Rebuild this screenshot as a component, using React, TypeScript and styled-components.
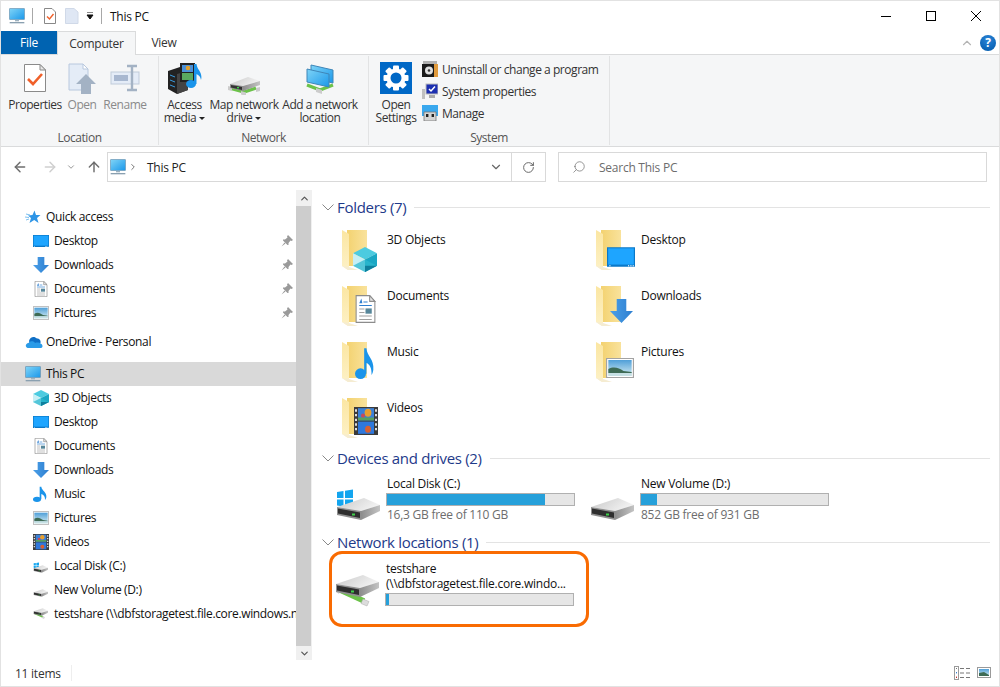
import React from "react"
import styled, {createGlobalStyle} from "styled-components"
import {ArrowLeft, ArrowRight, ArrowUp, ChevronDown, ChevronRight, ChevronUp, RotateCw, Search} from "lucide-react"

const Global = createGlobalStyle`
  html, body {
    margin: 0;
    padding: 0;
    background: #fff;
  }
  * {
    box-sizing: border-box;
  }
`

const Window = styled.div`
  width: 1000px;
  height: 687px;
  border: 1px solid #e2e2e2;
  background: #fff;
  display: flex;
  flex-direction: column;
  overflow: hidden;
  font-family: "Open Sans", "Noto Sans", sans-serif;
  font-size: 12px;
  letter-spacing: -0.25px;
  color: #111;
`

const TitleBar = styled.header`
  height: 30px;
  display: flex;
  align-items: center;
  padding-left: 8px;
  flex: none;
`

const QuickSep = styled.span`
  width: 1px;
  height: 16px;
  background: #a8a8a8;
  margin: 0 7px;
`

const TitleText = styled.span`
  margin-left: 1px;
`

const WindowButtons = styled.div`
  margin-left: auto;
  display: flex;
  margin-right: 1px;
`

const WindowButton = styled.div`
  width: 45px;
  height: 30px;
  display: flex;
  align-items: center;
  justify-content: center;
`

const TabRow = styled.nav`
  height: 24px;
  flex: none;
  display: flex;
  border-bottom: 1px solid #dadbdc;
  align-items: stretch;
`

const Tab = styled.div`
  width: ${(p) => p.$w}px;
  height: ${(p) => (p.$active ? 24 : 23)}px;
  display: flex;
  align-items: center;
  justify-content: center;
  color: ${(p) => (p.$file ? "#fff" : "#333")};
  background: ${(p) => (p.$file ? "#0063b1" : p.$active ? "#f5f6f7" : "#fff")};
  ${(p) => p.$active && "border: 1px solid #dadbdc; border-bottom: 0;"}
`

const TabTools = styled.div`
  margin-left: auto;
  display: flex;
  align-items: center;
  gap: 6px;
  margin-right: 3px;
  color: #b5b5b5;
`

const Help = styled.span`
  width: 16px;
  height: 16px;
  border-radius: 50%;
  background: radial-gradient(circle at 50% 30%, #2a84d8, #0058a8);
  color: #fff;
  font-weight: 700;
  font-size: 12px;
  display: flex;
  align-items: center;
  justify-content: center;
`

const Ribbon = styled.section`
  height: 92px;
  flex: none;
  background: #f5f6f7;
  border-bottom: 1px solid #dadbdc;
  display: flex;
  padding-top: 1px;
  letter-spacing: -0.45px;
`

const Group = styled.div`
  width: ${(p) => p.$w}px;
  height: 89px;
  border-right: 1px solid #e2e3e4;
  display: flex;
  flex-direction: column;
`

const GroupBody = styled.div`
  height: 74px;
  flex: none;
  display: flex;
  padding-left: ${(p) => p.$pad}px;
  padding-top: 6px;
`

const GroupLabel = styled.div`
  height: 15px;
  line-height: 15px;
  text-align: center;
  color: #555;
`

const BigButton = styled.div`
  width: ${(p) => p.$w}px;
  display: flex;
  flex-direction: column;
  align-items: center;
  text-align: center;
  line-height: 13px;
  color: ${(p) => (p.$off ? "#8a8a8a" : "#333")};
  white-space: nowrap;
`

const BigIcon = styled.div`
  height: 32px;
  margin-bottom: 4px;
  display: flex;
  align-items: flex-end;
`

const Caret = styled.span`
  display: inline-block;
  width: 0;
  height: 0;
  margin-left: 3px;
  vertical-align: 2px;
  border-left: 3px solid transparent;
  border-right: 3px solid transparent;
  border-top: 3px solid #222;
`

const SmallList = styled.div`
  display: flex;
  flex-direction: column;
  margin-left: 5px;
  margin-top: -4px;
`

const SmallItem = styled.div`
  height: 22px;
  display: flex;
  align-items: center;
  gap: 4px;
  color: #333;
`

const AddressRow = styled.div`
  height: 43px;
  flex: none;
  padding-top: 5px;
  display: flex;
  align-items: flex-start;
  color: #777;
`

const NavBtn = styled.div`
  width: ${(p) => p.$w}px;
  height: 30px;
  display: flex;
  align-items: center;
  justify-content: center;
  color: ${(p) => p.$c};
`

const AddressBox = styled.div`
  width: 439px;
  height: 30px;
  border: 1px solid #d9d9d9;
  display: flex;
  align-items: center;
  padding-left: 2px;
`

const AddressText = styled.span`
  margin-left: 7px;
  color: #222;
`

const AddressEnd = styled.div`
  margin-left: auto;
  display: flex;
  align-items: center;
  height: 100%;
`

const AddressBtn = styled.div`
  width: ${(p) => p.$w}px;
  height: 100%;
  display: flex;
  align-items: center;
  justify-content: center;
  color: #666;
  ${(p) => p.$sep && "border-left: 1px solid #d9d9d9;"}
`

const SearchBox = styled.div`
  width: 429px;
  height: 30px;
  margin-left: 12px;
  border: 1px solid #d9d9d9;
  display: flex;
  align-items: center;
  padding-left: 13px;
  gap: 13px;
  color: #6d6d6d;
`

const Main = styled.div`
  flex: 1;
  min-height: 0;
  display: flex;
`

const Sidebar = styled.aside`
  width: 295px;
  flex: none;
  padding-top: 15px;
  overflow: hidden;
  letter-spacing: -0.35px;
`

const SideRow = styled.div`
  height: 24px;
  display: flex;
  align-items: center;
  white-space: nowrap;
  overflow: hidden;
  padding-left: ${(p) => (p.$level === 2 ? 32 : 24)}px;
  padding-bottom: 1px;
  margin-top: ${(p) => p.$top ?? 0}px;
  background: ${(p) => (p.$selected ? "#d9d9d9" : "transparent")};
  gap: 5px;
`

const PinMark = styled.span`
  margin-left: auto;
  margin-right: 3px;
  display: flex;
`

const Scrollbar = styled.div`
  width: 16px;
  flex: none;
  background: #f0f0f0;
  display: flex;
  flex-direction: column;
  color: #555;
`

const ScrollEnd = styled.div`
  height: ${(p) => p.$h}px;
  display: flex;
  align-items: center;
  justify-content: center;
`

const ScrollThumb = styled.div`
  flex: 1;
  background: #cdcdcd;
  width: 15px;
`

const Content = styled.main`
  flex: 1;
  min-width: 0;
  padding-top: 7px;
  display: flex;
  flex-direction: column;
`

const SectionHeader = styled.div`
  height: 20px;
  flex: none;
  display: flex;
  align-items: center;
  padding-left: 10px;
  padding-right: 9px;
`

const SectionTitle = styled.span`
  margin-left: 3px;
  font-size: 15px;
  letter-spacing: -0.3px;
  color: #1e3a8a;
  white-space: nowrap;
`

const SectionLine = styled.span`
  flex: 1;
  height: 1px;
  background: #e3e3e3;
  margin-left: 8px;
`

const FolderGrid = styled.div`
  display: grid;
  grid-template-columns: 254px 254px;
  grid-template-rows: 56px 56px 56px 52px;
  margin-top: 11px;
  padding-left: 26px;
`

const FolderTile = styled.div`
  display: flex;
  gap: 1px;
  line-height: 24px;
`

const DriveGrid = styled.div`
  display: grid;
  grid-template-columns: 254px 254px;
  height: 56px;
  margin-top: 8px;
  padding-left: 23px;
`

const DriveTile = styled.div`
  display: flex;
  gap: 3px;
`

const DriveInfo = styled.div`
  width: 189px;
  line-height: 16px;
  white-space: nowrap;
`

const Name = styled.div`
  padding-left: 1px;
`

const Free = styled.div`
  padding-left: 1px;
  margin-top: 1px;
  color: #6d6d6d;
`

const Bar = styled.div`
  height: 13px;
  margin-top: ${(p) => p.$top ?? 1}px;
  background: #e6e6e6;
  border: 1px solid #b0b0b0;
`

const BarFill = styled.div`
  height: 100%;
  background: #26a0da;
`

const NetTile = styled.div`
  width: 260px;
  height: 76px;
  margin: -1px 0 0 17px;
  border: 3px solid #f96b02;
  border-radius: 13px;
  padding: 6px 0 0 2px;
  display: flex;
  gap: 3px;
`

const NetInfo = styled.div`
  width: 189px;
  padding-top: 1px;
  line-height: 15px;
  white-space: nowrap;
`

const NetIcon = styled.div`
  padding-top: 8px;
`

const StatusBar = styled.footer`
  height: 26px;
  flex: none;
  display: flex;
  align-items: center;
  padding-left: 14px;
  color: #333;
`

const StatusSep = styled.span`
  width: 1px;
  height: 16px;
  margin-left: 10px;
  background: #eee;
`

const ViewBtns = styled.div`
  margin-left: auto;
  margin-right: 8px;
  display: flex;
  align-items: center;
  gap: 7px;
`

/* artwork, all in a 24 unit box so it can go in the tree or on a folder */
const Defs = () => (
  <svg width="0" height="0" style={{position: "absolute"}}>
    <defs>
      <linearGradient id="screen" x1="0" y1="0" x2="1" y2="1">
        <stop offset="0" stopColor="#7fd4f7" />
        <stop offset="1" stopColor="#1b98ea" />
      </linearGradient>
      <linearGradient id="sky" x1="0" y1="0" x2="0" y2="1">
        <stop offset="0" stopColor="#4f9fd8" />
        <stop offset="1" stopColor="#d8eef2" />
      </linearGradient>
      <linearGradient id="back" x1="0" y1="0" x2="1" y2="0">
        <stop offset="0" stopColor="#f3d270" />
        <stop offset="1" stopColor="#f9e29c" />
      </linearGradient>
      <linearGradient id="flap" x1="0" y1="0" x2="0" y2="1">
        <stop offset="0" stopColor="#fbe6a2" />
        <stop offset="1" stopColor="#fdf1c6" />
      </linearGradient>
      <linearGradient id="driveTop" x1="0" y1="0" x2="1" y2="0.4">
        <stop offset="0" stopColor="#c8c8c8" />
        <stop offset="1" stopColor="#f2f2f2" />
      </linearGradient>
      <linearGradient id="driveSide" x1="0" y1="0" x2="1" y2="0">
        <stop offset="0" stopColor="#8d8d8d" />
        <stop offset="1" stopColor="#c4c4c4" />
      </linearGradient>
      <linearGradient id="arrow" x1="0" y1="0" x2="1" y2="0">
        <stop offset="0" stopColor="#4a9fe8" />
        <stop offset="1" stopColor="#2e7fd0" />
      </linearGradient>
    </defs>
  </svg>
)

const MonitorArt = () => (
  <>
    <rect x="1" y="1" width="22" height="16" fill="url(#screen)" stroke="#5e8fb0" />
    <rect x="9" y="18" width="6" height="2" fill="#9eb2c0" />
    <rect x="1" y="21" width="22" height="2" fill="#8aa0b0" />
  </>
)

const CubeArt = () => (
  <>
    <path d="M12 0 24 6 12 12 0 6z" fill="#4ccbe0" />
    <path d="M0 6 12 12V24L0 18z" fill="#c6eff5" />
    <path d="M12 12 24 6V18L12 24z" fill="#1aa7c4" />
    <path d="M0 18 12 12 24 18 12 24z" fill="#2eb8cf" opacity=".75" />
    <path d="M12 18 24 18 12 24z" fill="#0f7f9d" />
  </>
)

const DesktopArt = () => (
  <>
    <rect x="0" y="3" width="24" height="18" fill="#0a78c8" />
    <rect x="1" y="4" width="22" height="15" fill="#1ea5ff" />
    <rect x="2" y="19.6" width="1" height="1" fill="#fff" />
    <rect x="18" y="19.6" width="1" height="1" fill="#fff" />
    <rect x="20" y="19.6" width="1" height="1" fill="#fff" />
    <rect x="22" y="19.6" width="1" height="1" fill="#fff" />
  </>
)

const ArrowArt = () => <path d="M7 0H17V12H24L12 24 0 12H7z" fill="url(#arrow)" />

const DocArt = () => (
  <>
    <path d="M3 .5H16L21 5.5V23.5H3z" fill="#fff" stroke="#8c8c8c" />
    <path d="M16 .5V5.5H21z" fill="#e4e4e4" stroke="#8c8c8c" />
    <path d="M6 7 8 3 9 7z" fill="#2f7fd0" />
    <path d="M10 6H14M6 9H18" stroke="#2f7fd0" />
    <path d="M6 12H11M6 15H11M6 18H18M6 21H18" stroke="#a0a0a0" />
    <rect x="12" y="11.5" width="6" height="4.5" fill="#56869a" />
  </>
)

const PictureArt = () => (
  <>
    <rect x=".5" y="2.5" width="23" height="19" fill="#fff" stroke="#a3a3a3" />
    <rect x="2" y="4" width="20" height="16" fill="url(#sky)" />
    <path d="M2 13C7 10 11 12 15 15L22 16V17H2z" fill="#3e6b55" />
    <path d="M2 17H22V20H2z" fill="#c6e0e4" />
  </>
)

const NoteArt = () => (
  <>
    <ellipse cx="6" cy="20" rx="6" ry="4" fill="#1a94ea" />
    <path d="M10 1H12.5C13 7 21 9 20 17 19.5 19 19 20 18 21 18.5 16 16 13 12.5 12V20H10z" fill="#1a94ea" />
  </>
)

const FilmArt = () => (
  <>
    <rect x="0" y="0" width="24" height="24" fill="#3b3b3b" />
    <rect x="4" y="1" width="16" height="10.5" fill="#3a80d8" />
    <rect x="4" y="12.5" width="16" height="10.5" fill="#2f78dc" />
    <circle cx="14" cy="5" r="3.4" fill="#e8a030" />
    <circle cx="9" cy="7.5" r="2" fill="#c84a5a" />
    <path d="M4 9H20V11.5H4z" fill="#59a060" />
    <circle cx="14" cy="19" r="3" fill="#d86030" />
    <path d="M1 2H3V4H1zM1 6H3V8H1zM1 10H3V12H1zM1 14H3V16H1zM1 18H3V20H1zM21 2H23V4H21zM21 6H23V8H21zM21 10H23V12H21zM21 14H23V16H21zM21 18H23V20H21z" fill="#ddd" />
  </>
)

const Art = ({children, size = 16}) => (
  <svg width={size} height={size} viewBox="0 0 24 24" style={{flex: "none"}}>
    {children}
  </svg>
)

const Folder = ({x, y, w, h, children}) => (
  <svg width="48" height="48" viewBox="0 0 48 48" style={{flex: "none"}}>
    <path d="M9 2H29V38H9z" fill="url(#back)" />
    <path d="M4 2 11 6V42H10L4 38z" fill="url(#flap)" />
    <path d="M4 38 10 42H20L11 39z" fill="#f5ecd2" />
    <svg x={x} y={y} width={w} height={h} viewBox="0 0 24 24" preserveAspectRatio="none">
      {children}
    </svg>
  </svg>
)

const Drive = ({size = 48, net, win}) => (
  <svg width={size} height={size} viewBox="0 0 48 48" style={{flex: "none"}}>
    {win && <path d="M2 16 8.5 15V22H2zM10 14.8 18 13.5V22H10zM2 23.5H8.5V30.5L2 29.5zM10 23.5H18V32L10 30.8z" fill="#12a5ef" />}
    <g transform={net ? "translate(2 7)" : "translate(2 22)"}>
      {net && (
        <>
          <path d="M4 15 28 26" stroke="#6cc24a" strokeWidth="5.5" fill="none" />
          <path d="M0 12 5 14.5 3 19 0 17z" fill="#d4d4d4" />
          <path d="M27 24 33 26.5 31 31 25 28.5z" fill="#dcdcdc" stroke="#aaa" strokeWidth=".5" />
        </>
      )}
      <path d="M0 9 27 0 43 7 24 13z" fill="url(#driveTop)" />
      <path d="M0 9 24 13V22L0 17z" fill="#8f8f8f" />
      <path d="M1 10.5 23 14.5V20L1 15.5z" fill="#2e2e2e" />
      <path d="M24 13 43 7V13L24 22z" fill="url(#driveSide)" />
      <rect x="15" y="15.5" width="3" height="2" fill="#3ed04a" />
    </g>
  </svg>
)

const SectionChevron = () => (
  <svg width="12" height="7" viewBox="0 0 12 7" style={{flex: "none"}}>
    <path d="M.5 .5 6 6 11.5 .5" stroke="#888" fill="none" />
  </svg>
)

const PinIcon = () => (
  <svg width="12" height="12" viewBox="0 0 12 12">
    <path d="M7 0 12 5 10.5 6 9.5 5.5 7.5 8 7.5 10 6.5 10 2 5.5 2 4.5 4 4.5 6.5 2.5 6 1.5z" fill="#9a9a9a" />
    <path d="M3.5 7.5 .5 11.5 4.5 8.5z" fill="#9a9a9a" />
  </svg>
)

const StarIcon = () => (
  <svg width="16" height="16" viewBox="0 0 16 16" style={{flex: "none"}}>
    <path d="M9.5 1.5 11 6 15.5 6 12 9 13.5 14 9.2 11 4.5 14 6 9 3 6.5 7.5 6z" fill="#2e95e6" />
    <path d="M1 5 5 6M0 8 4 8.5M1 11 4 10" stroke="#7cc0f0" />
  </svg>
)

const CloudIcon = () => (
  <svg width="18" height="14" viewBox="0 0 18 14" style={{flex: "none", marginRight: -2}}>
    <path d="M4 6C5 2 9 .5 12 3.5 15 3.5 16 6 15.5 8L5 9z" fill="#0f6fc6" />
    <path d="M3 13C0 12.5 0 8.5 3.5 8 5 5.5 9 5.5 10 8 13 6.5 18 8.5 17.5 11.5 17.2 12.7 16.5 13 15 13z" fill="#2a9be8" />
  </svg>
)

const PropertiesIcon = () => (
  <svg width="32" height="32" viewBox="0 0 32 32">
    <path d="M5.5 2.5H21L26.5 8V29.5H5.5z" fill="#fff" stroke="#8a8a8a" />
    <path d="M21 2.5V8H26.5z" fill="#e8e8e8" stroke="#8a8a8a" />
    <path d="M9 17 14 22 23 12" stroke="#f0602a" strokeWidth="2.6" fill="none" />
  </svg>
)

const OpenIcon = () => (
  <svg width="32" height="32" viewBox="0 0 32 32">
    <path d="M3 2H17L22 7V28H3z" fill="#e4ecf7" stroke="#b8c8de" />
    <path d="M17 2V7H22z" fill="#fff" stroke="#b8c8de" />
    <path d="M20 12 30 22H25V32H15V22H10z" fill="#a3b2c4" />
  </svg>
)

const RenameIcon = () => (
  <svg width="32" height="32" viewBox="0 0 32 32">
    <rect x="2" y="10" width="28" height="12" fill="#e4ecf7" stroke="#c0cbda" />
    <rect x="5" y="13" width="14" height="6" fill="#a8b8d0" />
    <path d="M18 4H28M18 28H28M23 4V28" stroke="#a3b2c4" strokeWidth="2.4" />
  </svg>
)

const MediaIcon = () => (
  <svg width="34" height="32" viewBox="0 0 34 32">
    <path d="M0 9 12 5 20 9V28L9 32 0 27z" fill="#222" />
    <path d="M9 12 20 9V28L9 32z" fill="#444" />
    <path d="M2 13 7 15M2 18 7 20M2 23 7 25" stroke="#3a9be0" />
    <rect x="12" y="1" width="15" height="19" fill="#222" />
    <rect x="14" y="3" width="11" height="7" fill="#4a90d8" />
    <rect x="14" y="11" width="11" height="7" fill="#5aa860" />
    <circle cx="20" cy="6" r="2.3" fill="#e0a030" />
    <ellipse cx="23" cy="22" rx="5" ry="4" fill="#1a94ea" />
    <path d="M26 2H28.5C29 8 35 10 33 18 32.5 14 30 13 28.5 12V22H26z" fill="#1a94ea" />
  </svg>
)

const NetDriveIcon = () => (
  <svg width="34" height="32" viewBox="0 0 34 32" style={{marginBottom: "-1px"}}>
    <g transform="translate(1 14)">
      <path d="M2 11 16 15 28 11" stroke="#6cc24a" strokeWidth="3.4" fill="none" />
      <path d="M0 9 4 10 4 14 0 13z" fill="#ccc" />
      <path d="M28 11 32 10V14L28 15z" fill="#ccc" />
      <path d="M13 14 18 15.5V19L13 17.5z" fill="#ccc" />
      <path d="M2 7 20 0 32 4 15 9z" fill="url(#driveTop)" />
      <path d="M2 7 15 9V14L2 11z" fill="#8f8f8f" />
      <path d="M3 8 14 10V13L3 10.5z" fill="#333" />
      <path d="M15 9 32 4V8L15 14z" fill="url(#driveSide)" />
      <rect x="9" y="10" width="2" height="1.4" fill="#3ed04a" />
    </g>
  </svg>
)

const AddNetIcon = () => (
  <svg width="30" height="32" viewBox="0 0 30 32" style={{marginBottom: "-1px"}}>
    <path d="M2 22 15 27 28 22" stroke="#6cc24a" strokeWidth="3.4" fill="none" />
    <path d="M6 2 28 7V20L6 15z" fill="url(#screen)" stroke="#3f86b8" />
    <path d="M2 6 24 11V24L2 19z" fill="url(#screen)" stroke="#3f86b8" />
    <path d="M11 25 17 27V31L11 29z" fill="#ccc" />
  </svg>
)

const SettingsIcon = () => (
  <svg width="32" height="32" viewBox="0 0 32 32">
    <rect width="32" height="32" fill="#0068c6" />
    <g transform="translate(16 16)" fill="#fff">
      {[0, 45, 90, 135, 180, 225, 270, 315].map((a) => (
        <rect key={a} x="-3" y="-12.5" width="6" height="6" rx="1" transform={`rotate(${a})`} />
      ))}
    </g>
    <circle cx="16" cy="16" r="7.5" fill="none" stroke="#fff" strokeWidth="4" />
  </svg>
)

const UninstallIcon = () => (
  <svg width="16" height="16" viewBox="0 0 16 16" style={{flex: "none"}}>
    <rect x="1" y="0" width="14" height="4" fill="#b0b0b0" />
    <rect x="0" y="3" width="16" height="13" fill="#1a1a1a" />
    <rect x="12" y="3" width="4" height="13" fill="#e09a3c" />
    <circle cx="7" cy="9.5" r="4" fill="#e0e0e0" />
    <circle cx="7" cy="9.5" r="1.3" fill="#333" />
  </svg>
)

const SysPropsIcon = () => (
  <svg width="16" height="16" viewBox="0 0 16 16" style={{flex: "none"}}>
    <rect x="0" y="6" width="3" height="10" fill="#c0c0c0" />
    <rect x="4" y="1" width="12" height="10" fill="#1c2fb0" stroke="#bbb" />
    <path d="M7 6 9 8 13 3.5" stroke="#fff" strokeWidth="1.5" fill="none" />
    <rect x="7" y="12" width="6" height="3" fill="#aaa" />
  </svg>
)

const ManageIcon = () => (
  <svg width="16" height="16" viewBox="0 0 16 16" style={{flex: "none"}}>
    <rect x="0" y="0" width="16" height="11" fill="#39a8ee" />
    <path d="M2 16V7H14V16z" fill="#d4d4d4" stroke="#777" strokeWidth=".8" />
    <rect x="4" y="9" width="2.4" height="3" fill="#222" />
    <rect x="9.6" y="9" width="2.4" height="3" fill="#222" />
  </svg>
)

const DetailsViewIcon = () => (
  <svg width="16" height="14" viewBox="0 0 16 14">
    <rect x=".5" y=".5" width="4" height="13" fill="#fff" stroke="#9a9a9a" />
    <rect x="2" y="2" width="1" height="1" fill="#777" />
    <rect x="2" y="6" width="1" height="1.4" fill="#3a7fd0" />
    <rect x="2" y="10.6" width="1" height="1.4" fill="#c03030" />
    <path d="M6 2.5H10M12 2.5H16M6 7H10M12 7H16M6 11.5H10M12 11.5H16" stroke="#777" />
  </svg>
)

const ThumbViewIcon = () => (
  <svg width="14" height="12" viewBox="0 0 14 12">
    <rect x=".5" y=".5" width="13" height="10" fill="#fff" stroke="#9a9a9a" />
    <rect x="2" y="2" width="10" height="7" fill="url(#sky)" />
    <path d="M2 6 7 5 12 8V9H2z" fill="#3e6b55" />
  </svg>
)

const folders = [
  {name: "3D Objects", x: 15, y: 19, w: 24, h: 25, art: <CubeArt />},
  {name: "Desktop", x: 15, y: 16, w: 28, h: 26, art: <DesktopArt />},
  {name: "Documents", x: 15, y: 11, w: 25, h: 28, art: <DocArt />},
  {name: "Downloads", x: 18, y: 15, w: 23, h: 24, art: <ArrowArt />},
  {name: "Music", x: 17, y: 7, w: 22, h: 32, art: <NoteArt />},
  {name: "Pictures", x: 14, y: 16, w: 28, h: 24, art: <PictureArt />},
  {name: "Videos", x: 16, y: 11, w: 24, h: 28, art: <FilmArt />},
]

const pinned = [
  {name: "Desktop", art: <DesktopArt />},
  {name: "Downloads", art: <ArrowArt />},
  {name: "Documents", art: <DocArt />},
  {name: "Pictures", art: <PictureArt />},
]

const thisPc = [
  {name: "3D Objects", icon: <Art><CubeArt /></Art>},
  {name: "Desktop", icon: <Art><DesktopArt /></Art>},
  {name: "Documents", icon: <Art><DocArt /></Art>},
  {name: "Downloads", icon: <Art><ArrowArt /></Art>},
  {name: "Music", icon: <Art><NoteArt /></Art>},
  {name: "Pictures", icon: <Art><PictureArt /></Art>},
  {name: "Videos", icon: <Art><FilmArt /></Art>},
  {name: "Local Disk (C:)", icon: <Drive size={16} win />},
  {name: "New Volume (D:)", icon: <Drive size={16} />},
  {name: "testshare (\\\\dbfstoragetest.file.core.windows.net)", icon: <Drive size={16} net />},
]

export default function App() {
  return (
    <Window>
      <Global />
      <Defs />
      <TitleBar>
        <Art><MonitorArt /></Art>
        <QuickSep />
        <svg width="14" height="16" viewBox="0 0 14 16" style={{marginLeft: 3}}>
          <path d="M1.5 .5H9L12.5 4V15.5H1.5z" fill="#fff" stroke="#888" />
          <path d="M4 8.5 6.5 11 10.5 6" stroke="#f0602a" strokeWidth="1.4" fill="none" />
        </svg>
        <svg width="14" height="16" viewBox="0 0 14 16" style={{marginLeft: 8}}>
          <path d="M.5 .5H9L13 4V15.5H.5z" fill="#dfe7f4" stroke="#d0d9e8" />
        </svg>
        <svg width="8" height="8" viewBox="0 0 8 8" style={{marginLeft: 7}}>
          <path d="M1 0H7M1 3H7L4 7z" stroke="#111" fill="#111" />
        </svg>
        <QuickSep />
        <TitleText>This PC</TitleText>
        <WindowButtons>
          <WindowButton>
            <svg width="10" height="10"><path d="M0 5.5H10" stroke="#000" /></svg>
          </WindowButton>
          <WindowButton>
            <svg width="10" height="10"><rect x=".5" y=".5" width="9" height="9" fill="none" stroke="#000" /></svg>
          </WindowButton>
          <WindowButton>
            <svg width="10" height="10"><path d="M0 0 10 10M10 0 0 10" stroke="#000" /></svg>
          </WindowButton>
        </WindowButtons>
      </TitleBar>

      <TabRow>
        <Tab $w={56} $file>File</Tab>
        <Tab $w={79} $active>Computer</Tab>
        <Tab $w={56}>View</Tab>
        <TabTools>
          <ChevronUp size={14} />
          <Help>?</Help>
        </TabTools>
      </TabRow>

      <Ribbon>
        <Group $w={158}>
          <GroupBody $pad={7}>
            <BigButton $w={54}>
              <BigIcon><PropertiesIcon /></BigIcon>
              Properties
            </BigButton>
            <BigButton $w={40} $off>
              <BigIcon><OpenIcon /></BigIcon>
              Open
            </BigButton>
            <BigButton $w={46} $off>
              <BigIcon><RenameIcon /></BigIcon>
              Rename
            </BigButton>
          </GroupBody>
          <GroupLabel>Location</GroupLabel>
        </Group>
        <Group $w={210}>
          <GroupBody $pad={3}>
            <BigButton $w={45}>
              <BigIcon><MediaIcon /></BigIcon>
              Access
              <span>media<Caret /></span>
            </BigButton>
            <BigButton $w={74}>
              <BigIcon><NetDriveIcon /></BigIcon>
              Map network
              <span>drive<Caret /></span>
            </BigButton>
            <BigButton $w={78}>
              <BigIcon><AddNetIcon /></BigIcon>
              Add a network
              <span>location</span>
            </BigButton>
          </GroupBody>
          <GroupLabel>Network</GroupLabel>
        </Group>
        <Group $w={241}>
          <GroupBody $pad={6}>
            <BigButton $w={42}>
              <BigIcon><SettingsIcon /></BigIcon>
              Open
              <span>Settings</span>
            </BigButton>
            <SmallList>
              <SmallItem><UninstallIcon />Uninstall or change a program</SmallItem>
              <SmallItem><SysPropsIcon />System properties</SmallItem>
              <SmallItem><ManageIcon />Manage</SmallItem>
            </SmallList>
          </GroupBody>
          <GroupLabel>System</GroupLabel>
        </Group>
      </Ribbon>

      <AddressRow>
        <NavBtn $w={38} $c="#6e6e6e"><ArrowLeft size={16} strokeWidth={2.2} /></NavBtn>
        <NavBtn $w={22} $c="#cfcfcf"><ArrowRight size={16} strokeWidth={2.2} /></NavBtn>
        <NavBtn $w={20} $c="#999"><ChevronDown size={10} strokeWidth={2.4} /></NavBtn>
        <NavBtn $w={26} $c="#6e6e6e"><ArrowUp size={16} strokeWidth={2.2} /></NavBtn>
        <AddressBox>
          <Art><MonitorArt /></Art>
          <NavBtn $w={14} $c="#777"><ChevronRight size={10} strokeWidth={2.4} /></NavBtn>
          <AddressText>This PC</AddressText>
          <AddressEnd>
            <AddressBtn $w={30}><ChevronDown size={14} strokeWidth={2} /></AddressBtn>
            <AddressBtn $w={34} $sep><RotateCw size={13} strokeWidth={1.8} /></AddressBtn>
          </AddressEnd>
        </AddressBox>
        <SearchBox>
          <Search size={14} strokeWidth={1.2} style={{transform: "scaleX(-1)"}} />
          Search This PC
        </SearchBox>
      </AddressRow>

      <Main>
        <Sidebar>
          <SideRow $level={1}><StarIcon />Quick access</SideRow>
          {pinned.map((p) => (
            <SideRow $level={2} key={p.name}>
              <Art>{p.art}</Art>
              {p.name}
              <PinMark><PinIcon /></PinMark>
            </SideRow>
          ))}
          <SideRow $level={1} $top={5}><CloudIcon />OneDrive - Personal</SideRow>
          <SideRow $level={1} $top={8} $selected><Art><MonitorArt /></Art>This PC</SideRow>
          {thisPc.map((p) => (
            <SideRow $level={2} key={p.name}>
              {p.icon}
              {p.name}
            </SideRow>
          ))}
        </Sidebar>
        <Scrollbar>
          <ScrollEnd $h={16}><ChevronUp size={11} strokeWidth={2.6} /></ScrollEnd>
          <ScrollThumb />
          <ScrollEnd $h={14}><ChevronDown size={11} strokeWidth={2.6} /></ScrollEnd>
        </Scrollbar>

        <Content>
          <SectionHeader>
            <SectionChevron />
            <SectionTitle>Folders (7)</SectionTitle>
            <SectionLine />
          </SectionHeader>
          <FolderGrid>
            {folders.map((f) => (
              <FolderTile key={f.name}>
                <Folder x={f.x} y={f.y} w={f.w} h={f.h}>{f.art}</Folder>
                {f.name}
              </FolderTile>
            ))}
          </FolderGrid>

          <SectionHeader>
            <SectionChevron />
            <SectionTitle>Devices and drives (2)</SectionTitle>
            <SectionLine />
          </SectionHeader>
          <DriveGrid>
            <DriveTile>
              <Drive win />
              <DriveInfo>
                <Name>Local Disk (C:)</Name>
                <Bar><BarFill style={{width: "84.5%"}} /></Bar>
                <Free>16,3 GB free of 110 GB</Free>
              </DriveInfo>
            </DriveTile>
            <DriveTile>
              <Drive />
              <DriveInfo>
                <Name>New Volume (D:)</Name>
                <Bar><BarFill style={{width: "8.5%"}} /></Bar>
                <Free>852 GB free of 931 GB</Free>
              </DriveInfo>
            </DriveTile>
          </DriveGrid>

          <SectionHeader>
            <SectionChevron />
            <SectionTitle>Network locations (1)</SectionTitle>
            <SectionLine />
          </SectionHeader>
          <NetTile>
            <NetIcon><Drive net /></NetIcon>
            <NetInfo>
              <Name>testshare</Name>
              <Name>(\\dbfstoragetest.file.core.windo...</Name>
              <Bar $top={2}><BarFill style={{width: "1.5%"}} /></Bar>
            </NetInfo>
          </NetTile>
        </Content>
      </Main>

      <StatusBar>
        11 items
        <StatusSep />
        <ViewBtns>
          <DetailsViewIcon />
          <ThumbViewIcon />
        </ViewBtns>
      </StatusBar>
    </Window>
  )
}
